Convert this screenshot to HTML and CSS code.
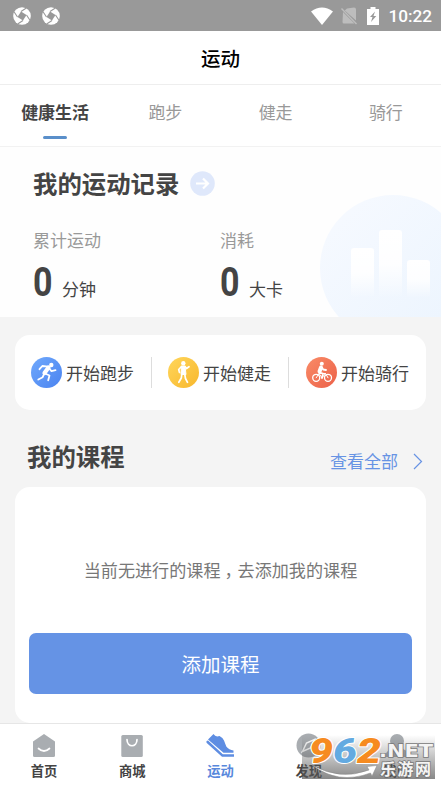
FILE: index.html
```html
<!DOCTYPE html>
<html lang="zh-CN">
<head>
<meta charset="UTF-8" />
<meta name="viewport" content="width=device-width, initial-scale=1.0" />
<title>运动</title>
<link rel="stylesheet" href="styles.css">
</head>
<body>

<div class="status-bar">
  <div class="status-left">
    <svg width="18" height="18" viewBox="0 0 18 18"><circle cx="9" cy="9" r="8.8" fill="#fff"/><path d="M8 4.500L13.500 8L10 13.500L4.500 10z" fill="#999"/><path d="M8 4.500L13 1.300M13.500 8L16.800 13M10 13.500L5 16.700M4.500 10L1.200 5" stroke="#999" stroke-width="1.100"/></svg>
    <svg width="18" height="18" viewBox="0 0 18 18"><circle cx="9" cy="9" r="8.8" fill="#fff"/><path d="M8 4.500L13.500 8L10 13.500L4.500 10z" fill="#999"/><path d="M8 4.500L13 1.300M13.500 8L16.800 13M10 13.500L5 16.700M4.500 10L1.200 5" stroke="#999" stroke-width="1.100"/></svg>
  </div>
  <div class="status-right">
    <svg class="wifi" width="22" height="18" viewBox="0 0 22 18"><path d="M0 4.500Q11-3.600 22 4.500L11 18z" fill="#fff"/></svg>
    <svg class="sim" width="17" height="18" viewBox="0 0 17 18"><path d="M6 1.500L13 0.500Q15 0.500 15 2.500V13.500L3.800 3.500zM2 5L13.500 16.500H3Q1.500 16.500 1.500 15z" fill="#bdbdbd"/><path d="M0.500 1.500L15.500 17" stroke="#bdbdbd" stroke-width="1.4"/></svg>
    <svg class="battery" width="12" height="18" viewBox="0 0 12 18"><path d="M3.500 0H8.500V2H12V18H0V2H3.500z" fill="#fff"/><path d="M8 4.500L3 10H5.500L4 15L9.300 9H6.500z" fill="#999"/></svg>
    <span class="clock">10:22</span>
  </div>
</div>

<header class="title-bar">运动</header>

<nav class="tabs">
  <a class="tab active">健康生活</a>
  <a class="tab">跑步</a>
  <a class="tab">健走</a>
  <a class="tab">骑行</a>
</nav>

<section class="record">
  <svg class="record-bg" width="121" height="122" viewBox="0 0 121 122">
    <defs>
      <linearGradient id="disc" x1="0" y1="0" x2="1" y2="1"><stop offset="0" stop-color="#f7faff"/><stop offset="1" stop-color="#ebf4fe"/></linearGradient>
      <linearGradient id="bar" x1="0" y1="0" x2="0" y2="1"><stop offset="0" stop-color="#fff"/><stop offset="0.500" stop-color="#fff" stop-opacity=".9"/><stop offset="1" stop-color="#fff" stop-opacity="0"/></linearGradient>
    </defs>
    <circle cx="73" cy="73" r="73" fill="url(#disc)"/>
    <rect x="31" y="53" width="23" height="50" rx="3" fill="url(#bar)"/>
    <rect x="59" y="35" width="23" height="68" rx="3" fill="url(#bar)"/>
    <rect x="87" y="65" width="23" height="38" rx="3" fill="url(#bar)"/>
  </svg>
  <h1 class="record-title">我的运动记录
    <svg width="25" height="25" viewBox="0 0 25 25"><circle cx="12.500" cy="12.500" r="12.300" fill="#dfe8fb"/><path d="M6 12.500H18M13 7.500L18 12.500L13 17.500" fill="none" stroke="#fff" stroke-width="2.200"/></svg>
  </h1>
  <div class="stats">
    <div class="stat">
      <div class="stat-label">累计运动</div>
      <div class="stat-value"><b>0</b><span>分钟</span></div>
    </div>
    <div class="stat">
      <div class="stat-label">消耗</div>
      <div class="stat-value"><b>0</b><span>大卡</span></div>
    </div>
  </div>
</section>

<main>
  <div class="quick">
    <a class="quick-item">
      <svg width="31" height="31" viewBox="0 0 31 31">
        <defs><linearGradient id="run" x1="0" y1="0" x2="1" y2="1"><stop offset="0" stop-color="#70a9fc"/><stop offset="1" stop-color="#4a83f0"/></linearGradient></defs>
        <circle cx="15.500" cy="15.500" r="15.500" fill="url(#run)"/>
        <circle cx="20.300" cy="8" r="2.200" fill="#fff"/>
        <path d="M17.500 10.500L13.500 16" stroke="#fff" stroke-width="4.200" stroke-linecap="round"/>
        <path d="M17 9.700L11.300 9L8.500 12.200M18 11L20.500 14.200L24.500 13.200M14 16.500L18.500 18.500L17.200 23.300M13 17L11.700 20.200L7.300 22.500" fill="none" stroke="#fff" stroke-width="1.800" stroke-linecap="round" stroke-linejoin="round"/>
      </svg>
      <span>开始跑步</span>
    </a>
    <a class="quick-item">
      <svg width="31" height="31" viewBox="0 0 31 31">
        <defs><linearGradient id="walk" x1="0" y1="0" x2="1" y2="1"><stop offset="0" stop-color="#ffd65c"/><stop offset="1" stop-color="#f8b72c"/></linearGradient></defs>
        <circle cx="15.500" cy="15.500" r="15.500" fill="url(#walk)"/>
        <circle cx="15.300" cy="6.200" r="2.200" fill="#fff"/>
        <path d="M13.500 9H17L18 17.500H13z" fill="#fff" stroke="#fff" stroke-width="1" stroke-linejoin="round"/>
        <path d="M13.500 9.500L10.700 12.500L11.500 15.500M17 9.500L18.500 11.500L21 9.700M13.800 17.500L13.300 21L10.800 25.300M16.800 17.500L17.500 21.500L19.500 25.300" fill="none" stroke="#fff" stroke-width="1.700" stroke-linecap="round" stroke-linejoin="round"/>
      </svg>
      <span>开始健走</span>
    </a>
    <a class="quick-item">
      <svg width="31" height="31" viewBox="0 0 31 31">
        <defs><linearGradient id="ride" x1="0" y1="0" x2="1" y2="1"><stop offset="0" stop-color="#f98c68"/><stop offset="1" stop-color="#ec6048"/></linearGradient></defs>
        <circle cx="15.500" cy="15.500" r="15.500" fill="url(#ride)"/>
        <g fill="none" stroke="#fff" stroke-linecap="round" stroke-linejoin="round">
          <circle cx="10.200" cy="20.800" r="3.500" stroke-width="1.300"/><circle cx="22" cy="20.800" r="3.500" stroke-width="1.300"/>
          <path d="M10.200 20.800L13 16.500H19.500L22 20.800M13 16.500L16 20.800L19.500 16.500" stroke-width="1"/>
          <path d="M15 10.500L13.500 14.500" stroke-width="4"/>
          <path d="M16 10.500L17.200 12.500L20 13M13.500 15.500L17 16.500L16 21" stroke-width="1.800"/>
        </g>
        <circle cx="15.800" cy="6.800" r="2" fill="#fff"/>
      </svg>
      <span>开始骑行</span>
    </a>
  </div>

  <div class="course-head">
    <h2>我的课程</h2>
    <a class="more">查看全部
      <svg width="10" height="17" viewBox="0 0 10 17"><path d="M1 1L8.500 8.500L1 16" fill="none" stroke="#6793e4" stroke-width="1.200"/></svg>
    </a>
  </div>

  <div class="course-card">
    <p>当前无进行的课程<span class="comma">，</span>去添加我的课程</p>
    <button class="add-btn">添加课程</button>
  </div>
</main>

<footer class="tabbar">
  <a class="tabbar-item">
    <svg width="28" height="25" viewBox="0 0 28 25"><path d="M14 1L25 8.500V22.500Q25 24 23.500 24H4.500Q3 24 3 22.500V8.500z" fill="#a9adb1"/><path d="M8.500 15.500Q14 20.500 19.500 15.500" fill="none" stroke="#fff" stroke-width="1.700" stroke-linecap="round"/></svg>
    <span>首页</span>
  </a>
  <a class="tabbar-item">
    <svg width="28" height="25" viewBox="0 0 28 25"><rect x="3.300" y="2" width="21.500" height="22" rx="1.500" fill="#a9adb1"/><path d="M9 6.500C9 14.800 19 14.800 19 6.500" fill="none" stroke="#fff" stroke-width="1.700" stroke-linecap="round"/></svg>
    <span>商城</span>
  </a>
  <a class="tabbar-item active">
    <svg width="28" height="25" viewBox="0 0 28 25"><path d="M2 6.500L7.500 1Q9.500 4.500 13.500 3Q17 4.800 18 7.500L20.300 13.500Q23 17 27.500 17.500V19.800H17.500z" fill="#5e8de2"/><path d="M0.500 8L2 7.500L16.800 21.200H28V23.800H16L0.500 9.800z" fill="#5e8de2"/></svg>
    <span>运动</span>
  </a>
  <a class="tabbar-item">
    <svg width="28" height="25" viewBox="0 0 28 25"><circle cx="13.500" cy="12.500" r="12" fill="#a9adb1"/><path d="M19.500 6.500L15.500 15L7.500 18.500L11.500 10z" fill="none" stroke="#fff" stroke-width="1.500"/></svg>
    <span>发现</span>
  </a>
  <a class="tabbar-item">
    <svg width="28" height="25" viewBox="0 0 28 25"><circle cx="14" cy="8" r="7" fill="#a9adb1"/><path d="M2 24Q3 15 14 15T26 24z" fill="#a9adb1"/></svg>
    <span>我的</span>
  </a>
</footer>

<svg class="site-mark" width="139" height="50" viewBox="0 0 139 50">
  <defs>
    <linearGradient id="shade" x1="0" y1="0" x2="0" y2="1"><stop offset="0" stop-color="#555" stop-opacity="0"/><stop offset="1" stop-color="#555" stop-opacity=".7"/></linearGradient>
  </defs>
  <rect x="0" y="0" width="133" height="44" fill="url(#shade)"/>
  <path d="M10 30Q38 46 67 35L65 31.500L75 30.500L70 41L68.500 38Q36 50 10 30z" fill="#fff" stroke="#888" stroke-width=".5"/>
  <g class="mark-digits">
    <text x="7" y="28" textLength="24" lengthAdjust="spacingAndGlyphs" fill="#f68b20">9</text>
    <text x="31" y="28" textLength="24" lengthAdjust="spacingAndGlyphs" fill="#63aae1">6</text>
    <text x="55" y="28" textLength="24" lengthAdjust="spacingAndGlyphs" fill="#f68b20">2</text>
  </g>
  <text class="mark-net" x="77" y="22" textLength="54" lengthAdjust="spacingAndGlyphs">.NET</text>
  <text class="mark-name" x="78" y="40" textLength="51" lengthAdjust="spacing">乐游网</text>
</svg>

</body>
</html>
```

FILE: styles.css
```css
* { box-sizing: border-box; }
body { margin: 0; height: 785px; overflow: hidden; display: flex; flex-direction: column; position: relative; background: #f4f4f4; color: #444; font-family: "Noto Sans CJK SC", sans-serif; font-size: 17px; }
h1, h2, p { margin: 0; }
svg { display: block; flex: none; }

.status-bar { height: 31px; flex: none; background: #999; display: flex; justify-content: space-between; align-items: center; padding: 0 9px 0 13px; }
.status-left { display: flex; gap: 11px; }
.status-right { display: flex; align-items: center; }
.sim { margin-left: 8px; }
.battery { margin-left: 9px; }
.clock { margin-left: 9px; color: #fff; font: 500 17.2px/31px Roboto, sans-serif; padding-top: 1px; }

.title-bar { height: 54px; flex: none; background: #fff; border-bottom: 1px solid #eee; color: #000; font-size: 19.5px; font-weight: 500; line-height: 53px; text-align: center; }

.tabs { height: 62px; flex: none; display: grid; grid-template-columns: repeat(4, 1fr); background: #fff; border-bottom: 1px solid #f2f2f2; }
.tab { display: flex; flex-direction: column; align-items: center; line-height: 54px; color: #999; }
.tab.active { color: #444; font-weight: bold; }
.tab.active::after { content: ""; width: 24px; height: 3px; margin-top: -3px; border-radius: 2px; background: #5a8fca; }

.record { position: relative; height: 170px; flex: none; background: #fefefe; padding: 17px 33px 0; }
.record-bg { position: absolute; right: 0; bottom: 0; }
.record-title { display: flex; align-items: center; gap: 11px; font-size: 24.4px; line-height: 38px; }
.stats { position: relative; display: grid; grid-template-columns: 187px 1fr; margin-top: 25px; }
.stat-label { color: #999; line-height: 26px; }
.stat-value { display: flex; align-items: baseline; gap: 11px; line-height: 60px; }
.stat-value b { width: 18px; font: bold 40px/60px Roboto, sans-serif; transform: scaleX(.85); transform-origin: left; }

main { flex: 1; min-height: 0; padding: 18px 15px 0; display: flex; flex-direction: column; }
.quick { height: 75px; display: grid; grid-template-columns: 136px 137px 1fr; align-items: center; background: #fff; border-radius: 15px; }
.quick-item { display: flex; align-items: center; gap: 4px; height: 31px; padding-left: 16px; }
.quick-item + .quick-item { border-left: 1px solid #ddd; }
.quick-item:last-child { padding-left: 17px; }

.course-head { height: 77px; flex: none; display: flex; align-items: center; justify-content: space-between; padding: 15px 3px 0 12px; }
.course-head h2 { font-size: 24.4px; line-height: 34px; }
.more { display: flex; align-items: center; gap: 15px; padding-top: 10px; line-height: 24px; color: #6793e4; }

.course-card { height: 236px; flex: none; display: flex; flex-direction: column; justify-content: space-between; padding: 70px 14px 29px; background: #fff; border-radius: 15px; text-align: center; color: #777; }
.course-card p { line-height: 26px; font-size: 17.1px; }
.comma { display: inline-block; width: 1em; text-indent: 4px; white-space: nowrap; }
.add-btn { height: 61px; border: none; border-radius: 7px; background: #6593e5; color: #fff; font: 19.5px "Noto Sans CJK SC", sans-serif; }

.tabbar { height: 62px; flex: none; display: grid; grid-template-columns: repeat(5, 1fr); background: #fff; border-top: 1px solid #e6e6e6; }
.tabbar-item { display: flex; flex-direction: column; align-items: center; padding-top: 9px; font-size: 13.3px; font-weight: bold; line-height: 25px; }
.tabbar-item.active { color: #5888dc; }

.site-mark { position: absolute; left: 302px; top: 735px; overflow: visible; }
.mark-digits { font: italic 900 35px Roboto, sans-serif; stroke: #fff; stroke-width: 2px; paint-order: stroke; stroke-linejoin: round; }
.mark-net { font: bold 18px "DejaVu Sans", sans-serif; fill: #f4f4f4; stroke: #777; stroke-width: 1.5px; paint-order: stroke; }
.mark-name { font: bold 16px "Noto Sans CJK SC", sans-serif; fill: #f4f4f4; stroke: #777; stroke-width: 1.5px; paint-order: stroke; }
```
